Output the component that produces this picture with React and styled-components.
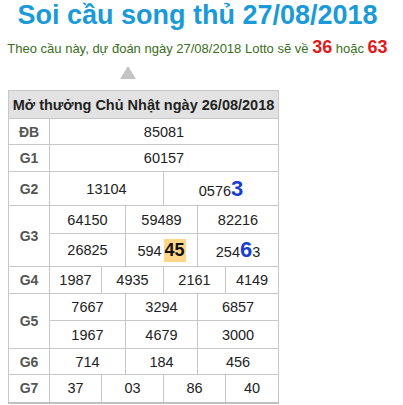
import React from "react";
import styled, { createGlobalStyle } from "styled-components";

const Global = createGlobalStyle`
  html, body { margin: 0; padding: 0; background: #fff; }
  body { font-family: "Liberation Sans", Arial, sans-serif; }
`;

const Page = styled.div`
  width: 395px;
`;

const Title = styled.h1`
  margin: 0;
  font-size: 27px;
  line-height: 30px;
  font-weight: bold;
  color: #1b9ad8;
  text-align: center;
`;

const Predict = styled.p`
  margin: 7px 0 0;
  font-size: 13px;
  line-height: 20px;
  color: #3a6e1c;
  text-align: center;
`;

const Hot = styled.b`
  color: #e01b1b;
  font-size: 18px;
`;

const Arrow = styled.div`
  width: 0;
  height: 0;
  margin: 7px 0 0 120px;
  border-left: 8px solid transparent;
  border-right: 8px solid transparent;
  border-bottom: 13px solid #c4c4c4;
`;

const Table = styled.table`
  margin: 11px 0 0 8px;
  width: 270px;
  table-layout: fixed;
  border-collapse: collapse;
  border: 1px solid #c8c8c8;
  border-bottom: 2px solid #c0c0c0;
  color: #222;
  font-size: 14.5px;
`;

const Head = styled.th`
  background: #e2e2e2;
  border: 1px solid #c8c8c8;
  font-size: 14.5px;
  font-weight: bold;
  color: #222;
  text-align: center;
  padding: 0;
`;

const Row = styled.tr`
  height: ${(p) => p.$h}px;
`;

const Label = styled.td`
  border: 1px solid #c8c8c8;
  font-weight: bold;
  color: #555;
  font-size: 14px;
  text-align: center;
  padding: 0;
`;

const Cell = styled.td`
  border: 1px solid #c8c8c8;
  text-align: center;
  padding: 0;
  white-space: nowrap;
`;

const Blue = styled.b`
  color: #1a3fd0;
  font-size: 22px;
`;

const Mark = styled.b`
  display: inline-block;
  background: #fdd68a;
  color: #111;
  font-size: 18px;
  line-height: 23px;
  padding: 0 1px;
  margin-left: 2px;
  vertical-align: middle;
`;

const Plain = styled.span`
  vertical-align: middle;
`;

const cols = [41, 52, 24, 38, 34, 28, 53];

const three = (vals) =>
  vals.map((v, i) => (
    <Cell key={i} colSpan={2}>
      {v}
    </Cell>
  ));

const four = (vals) =>
  vals.map((v, i) => (
    <Cell key={i} colSpan={i === 0 || i === 3 ? 1 : 2}>
      {v}
    </Cell>
  ));

export default function App() {
  return (
    <Page>
      <Global />
      <Title>Soi cầu song thủ 27/08/2018</Title>
      <Predict>
        Theo cầu này, dự đoán ngày 27/08/2018 Lotto sẽ về <Hot>36</Hot> hoặc{" "}
        <Hot>63</Hot>
      </Predict>
      <Arrow />
      <Table>
        <colgroup>
          {cols.map((w, i) => (
            <col key={i} style={{ width: w }} />
          ))}
        </colgroup>
        <thead>
          <Row $h={28}>
            <Head colSpan={7}>Mở thưởng Chủ Nhật ngày 26/08/2018</Head>
          </Row>
        </thead>
        <tbody>
          <Row $h={26}>
            <Label>ĐB</Label>
            <Cell colSpan={6}>85081</Cell>
          </Row>
          <Row $h={27}>
            <Label>G1</Label>
            <Cell colSpan={6}>60157</Cell>
          </Row>
          <Row $h={34}>
            <Label>G2</Label>
            <Cell colSpan={3}>13104</Cell>
            <Cell colSpan={3}>
              0576<Blue>3</Blue>
            </Cell>
          </Row>
          <Row $h={28}>
            <Label rowSpan={2}>G3</Label>
            {three(["64150", "59489", "82216"])}
          </Row>
          <Row $h={33}>
            {three([
              "26825",
              <>
                <Plain>594</Plain>
                <Mark>45</Mark>
              </>,
              <>
                254<Blue>6</Blue>3
              </>,
            ])}
          </Row>
          <Row $h={27}>
            <Label>G4</Label>
            {four(["1987", "4935", "2161", "4149"])}
          </Row>
          <Row $h={27}>
            <Label rowSpan={2}>G5</Label>
            {three(["7667", "3294", "6857"])}
          </Row>
          <Row $h={28}>{three(["1967", "4679", "3000"])}</Row>
          <Row $h={26}>
            <Label>G6</Label>
            {three(["714", "184", "456"])}
          </Row>
          <Row $h={28}>
            <Label>G7</Label>
            {four(["37", "03", "86", "40"])}
          </Row>
        </tbody>
      </Table>
    </Page>
  );
}
